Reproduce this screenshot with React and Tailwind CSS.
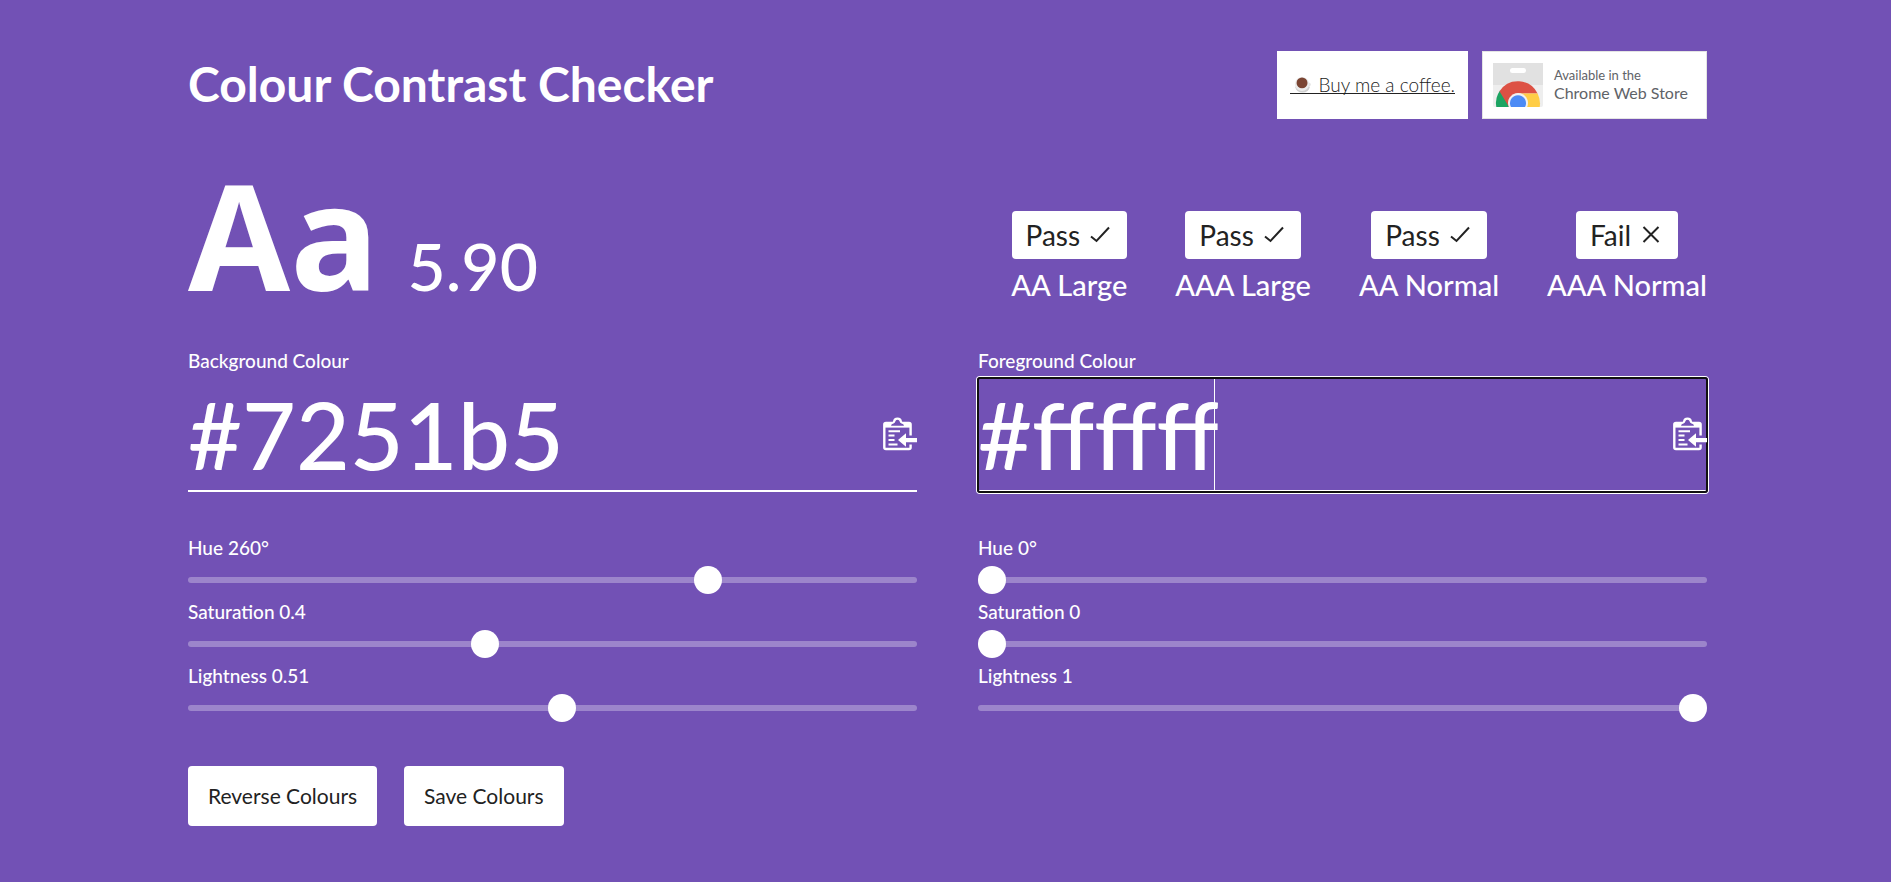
import { useState } from 'react';

const CHECKS = [
  { label: 'AA Large', pass: true },
  { label: 'AAA Large', pass: true },
  { label: 'AA Normal', pass: true },
  { label: 'AAA Normal', pass: false },
];

function CheckIcon() {
  return (
    <svg viewBox="0 0 20 20" className="size-5" fill="none" stroke="currentColor" strokeWidth="2" aria-hidden="true">
      <path d="M1 11.5 L6.5 16 L19 2.500" />
    </svg>
  );
}

function CrossIcon() {
  return (
    <svg viewBox="0 0 20 20" className="size-5" fill="none" stroke="currentColor" strokeWidth="2" aria-hidden="true">
      <path d="M2.500 2 L17.500 17 M17.500 2 L2.500 17" />
    </svg>
  );
}

function PasteIcon() {
  return (
    <svg viewBox="0 0 34 34" className="size-[34px]" aria-hidden="true">
      <path d="M27.6 18.500 V7.500 Q27.600 6 26 6 H3 Q1.300 6 1.300 7.500 V30.500 Q1.300 32 3 32 H26 Q27.600 32 27.600 30.500 V27.500" fill="none" stroke="#fff" strokeWidth="2.4" />
      <rect x="2" y="5" width="25" height="5.600" fill="#fff" />
      <path d="M7 6 Q10 5.800 10 4.500 Q10.300 0.500 14.500 0.500 Q18.700 0.500 19 4.500 Q19 5.800 22 6 Z" fill="#fff" />
      <path d="M8 8.800 Q8.200 6.800 10.500 6.600 Q12 6.200 12.300 4.500 Q12.600 2.800 14.500 2.800 Q16.400 2.800 16.700 4.500 Q17 6.200 18.500 6.600 Q20.800 6.800 21 8.800 Z" fill="#7251b5" />
      <path d="M5.500 14.300 H17 M5.500 18.500 H11.500 M5.500 23 H11.500 M5.500 27.500 H14.500" stroke="#fff" strokeWidth="2" />
      <path d="M15 23 L23 16.200 V21 H34 V25.200 H23 V29.800 Z" fill="#fff" />
    </svg>
  );
}

function CoffeeIcon() {
  return (
    <svg viewBox="0 0 18 18" className="mr-2 ml-1 size-[17px] shrink-0" aria-hidden="true">
      <ellipse cx="9" cy="12" rx="7.500" ry="5.500" fill="#cfcfcf" />
      <circle cx="15.500" cy="9" r="2.200" fill="#e2e2e2" />
      <circle cx="8.500" cy="8.500" r="7.500" fill="#ececec" />
      <circle cx="8.500" cy="7.300" r="5.800" fill="#7b4533" />
    </svg>
  );
}

function WebStoreIcon() {
  return (
    <svg viewBox="0 0 50 44" className="h-11 w-[50px] shrink-0" aria-hidden="true">
      <path d="M0 0 H50 V42 Q50 44 48 44 H2 Q0 44 0 42 Z" fill="#eeeeee" />
      <path d="M0 0 H50 V22 H0 Z" fill="#e1e1e1" />
      <rect x="17" y="5" width="16" height="5" rx="2.5" fill="#fff" />
      <path d="M3.300 44 A22 22 0 0 1 7 27.500 L17 44 Z" fill="#1da462" />
      <path d="M6.500 28.300 A22 22 0 0 1 44.600 30.500 H25 L16 44 Z" fill="#dd5144" />
      <path d="M25 30.500 H44.600 A22 22 0 0 1 46.700 44 H25 Z" fill="#ffcd46" />
      <path d="M15.800 44 A10 10 0 1 1 34.200 44 Z" fill="#f1f1f1" />
      <path d="M18 44 A8 8 0 1 1 32 44 Z" fill="#4c8bf5" />
    </svg>
  );
}

function Slider({ id, label, max, step, initial, unit = '' }) {
  const [value, setValue] = useState(initial);
  return (
    <div className="flex flex-col">
      <label htmlFor={id} className="text-[19px] leading-6 font-medium">
        {label} {Number(value.toFixed(2))}{unit}
      </label>
      <div className="flex h-10 items-center">
        <input
          id={id}
          type="range"
          min="0"
          max={max}
          step={step}
          value={value}
          onChange={(e) => setValue(Number(e.target.value))}
          className="h-[6px] w-full appearance-none rounded-full bg-white/30 [&::-webkit-slider-thumb]:size-7 [&::-webkit-slider-thumb]:appearance-none [&::-webkit-slider-thumb]:rounded-full [&::-webkit-slider-thumb]:bg-white"
        />
      </div>
    </div>
  );
}

function ColourPanel({ name, id, initial, focused, hue, saturation, lightness }) {
  const [hex, setHex] = useState(initial);
  return (
    <section className="min-w-0 flex-1">
      <label htmlFor={id} className="block text-[19px] leading-6 font-medium">{name} Colour</label>
      <div className="relative mt-[5px] flex h-[114px] items-center border-b-2 border-white">
        <input
          id={id}
          type="text"
          value={hex}
          onChange={(e) => setHex(e.target.value)}
          className="h-full w-full min-w-0 bg-transparent text-[93px] leading-none font-medium outline-none"
        />
        {focused && (
          <>
            <span className="pointer-events-none absolute inset-y-0 left-[236px] w-px bg-white" />
            <span className="pointer-events-none absolute -inset-x-px -top-px -bottom-[3px] rounded-[3px] border-2 border-[#101010] shadow-[0_0_0_1px_#fff]" />
          </>
        )}
        <button type="button" aria-label={`Paste ${name} colour`} className="absolute right-0">
          <PasteIcon />
        </button>
      </div>
      <div className="mt-11 flex flex-col">
        <Slider id={`${id}-hue`} label="Hue" max="360" step="1" initial={hue} unit="°" />
        <Slider id={`${id}-saturation`} label="Saturation" max="1" step="0.001" initial={saturation} />
        <Slider id={`${id}-lightness`} label="Lightness" max="1" step="0.001" initial={lightness} />
      </div>
    </section>
  );
}

export default function App() {
  return (
    <main className="min-h-screen bg-[#7251b5] pt-[51px] pr-[184px] pb-14 pl-[188px] font-['Lato','Open_Sans',sans-serif] text-white">
      <header className="flex items-start justify-between">
        <h1 className="text-[48px] leading-[66px] font-bold">Colour Contrast Checker</h1>
        <div className="flex gap-[14px]">
          <a href="#coffee" className="flex h-[68px] items-center bg-white px-[13px] text-[19px] font-light text-[#222]">
            <span className="flex items-center border-b border-[#222] leading-4 whitespace-nowrap"><CoffeeIcon />Buy me a coffee.</span>
          </a>
          <a href="#store" className="flex h-[68px] w-[225px] items-center gap-[11px] border border-[#e4e4e4] bg-white px-[10px] text-[#5f6368]">
            <WebStoreIcon />
            <span className="flex flex-col whitespace-nowrap">
              <span className="text-[13px] leading-4">Available in the</span>
              <span className="text-[16px] leading-5">Chrome Web Store</span>
            </span>
          </a>
        </div>
      </header>

      <div className="mt-[41px] flex items-end justify-between">
        <div className="flex items-baseline gap-7">
          <span className="font-['Open_Sans',sans-serif] text-[148px] leading-[148px] font-bold">Aa</span>
          <span className="text-[66px] leading-[66px] font-medium">5.90</span>
        </div>
        <ul className="flex gap-12 pb-[5px]">
          {CHECKS.map(({ label, pass }) => (
            <li key={label} className="flex flex-col items-center">
              <span className="flex h-12 items-center gap-[10px] rounded bg-white pr-[17px] pl-[14px] text-[28px] text-[#222]">
                {pass ? 'Pass' : 'Fail'}
                {pass ? <CheckIcon /> : <CrossIcon />}
              </span>
              <span className="mt-2 text-[29px] leading-9 font-medium">{label}</span>
            </li>
          ))}
        </ul>
      </div>

      <div className="mt-[41px] flex gap-[61px]">
        <ColourPanel name="Background" id="background" initial="#7251b5" hue={260} saturation={0.404} lightness={0.514} />
        <ColourPanel name="Foreground" id="foreground" initial="#ffffff" focused hue={0} saturation={0} lightness={1} />
      </div>

      <div className="mt-[38px] flex gap-[27px]">
        <button type="button" className="h-[60px] rounded bg-white px-5 text-[21px] text-[#222]">Reverse Colours</button>
        <button type="button" className="h-[60px] rounded bg-white px-5 text-[21px] text-[#222]">Save Colours</button>
      </div>
    </main>
  );
}
